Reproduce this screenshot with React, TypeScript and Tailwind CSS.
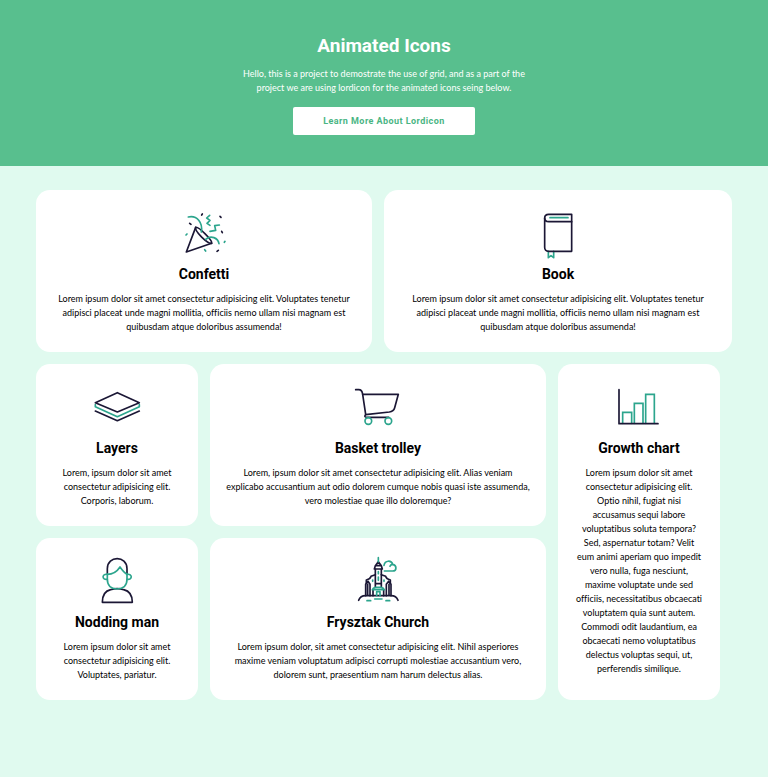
import type { ReactNode } from "react";

const DARK = "#1b1735";
const TEAL = "#2ca58d";

function Icon({ viewBox, children }: { viewBox: string; children: ReactNode }) {
  return (
    <svg
      viewBox={viewBox}
      className="h-[50px] w-[50px] overflow-visible"
      fill="none"
      strokeWidth={5}
      strokeLinecap="round"
      strokeLinejoin="round"
      aria-hidden="true"
    >
      {children}
    </svg>
  );
}

const confetti = (
  <Icon viewBox="26 24 150 150">
    <g stroke={DARK}>
      <path d="M76 82 L48 156 L124 130" />
      <path d="M76 82 C84 78 128 122 124 130 C112 132 72 94 76 82Z" />
      <path d="M94 45 L96 42 M58 70 L62 73 M149 49 L152 52 M154 94 L156 98 M140 154 L144 151" />
    </g>
    <g stroke={TEAL}>
      <path d="M54 51 C80 45 98 68 93 96" />
      <path d="M106 118 C122 104 143 114 146 131" />
      <path d="M118 46 L109 54 L119 61 L110 70 L119 76" />
      <path d="M147 75 L133 77 L136 91 L119 94" />
      <path d="M47 105 L50 102 M103 149 L106 153 M162 127 L164 124" />
    </g>
  </Icon>
);

const book = (
  <Icon viewBox="25 24 150 150">
    <path stroke={TEAL} d="M71 154 V173 L79 167 L87 173 V154" />
    <path stroke={TEAL} d="M76 53 H130" />
    <g stroke={DARK}>
      <path d="M141 43 H72 C56 43 56 65 72 65 H141 Z" />
      <path d="M60 54 V142 C60 150 64 154 72 154 H141 V65" />
    </g>
  </Icon>
);

const layers = (
  <Icon viewBox="37 21 150 150">
    <path stroke={TEAL} d="M47 89 V95 L113 125 L179 95 V89" />
    <g stroke={DARK}>
      <path d="M113 53 L179 83 L113 111 L47 83 Z" />
      <path d="M47 108 L113 137 L179 108" />
    </g>
  </Icon>
);

const cart = (
  <Icon viewBox="39 21 150 150">
    <g stroke={DARK}>
      <path d="M47 44 H56 C64 44 67 50 68 58 L77 118" />
      <path d="M68 58 H175 L164 98 Q161 109 148 111 L77 119 Q70 127 82 127 H146" />
    </g>
    <g stroke={TEAL}>
      <circle cx="85" cy="138" r="10" />
      <circle cx="145" cy="138" r="10" />
    </g>
  </Icon>
);

const chart = (
  <Icon viewBox="42 21 150 150">
    <g stroke={TEAL} strokeLinejoin="miter">
      <path d="M68 145 V112 H95 V145" />
      <path d="M103 145 V85 H129 V145" />
      <path d="M137 145 V58 H163 V145" />
    </g>
    <path stroke={DARK} d="M57 44 V146 H174" />
  </Icon>
);

const man = (
  <Icon viewBox="37 33 150 150">
    <g stroke={DARK}>
      <path d="M83 88 V71 C83 31 142 31 142 71 V88" />
      <path d="M93 134 C75 138 68 150 68 172 H158 C158 150 150 138 132 134 C120 130 105 130 93 134Z" />
    </g>
    <g stroke={TEAL}>
      <path d="M83 88 V103 C83 122 95 132 112 132 C130 132 142 122 142 103 V88" />
      <path d="M83 88 C98 88 112 80 121 66 C128 76 134 84 142 88" />
      <path d="M83 88 C66 85 66 106 83 103 M142 88 C159 85 159 106 142 103" />
    </g>
  </Icon>
);

const church = (
  <Icon viewBox="38 33 150 150">
    <g stroke={DARK}>
      <path d="M55 166 Q60 152 76 152 H152 Q168 152 173 166" />
      <path d="M114 50 L105 62 H123 Z M102 72 H126 M105 62 L102 72 M123 62 L126 72" />
      <path d="M105 73 V126 M123 73 V126" />
      <path d="M105 89 L92 94 Q90 102 78 105 V115 M123 89 L136 94 Q138 102 150 105 V115" />
      <path d="M83 109 L76 118 V152 M83 109 L89 118 V152 M82 118 V150 M145 109 L138 118 V152 M145 109 L152 118 V152 M146 118 V150" />
      <path d="M98 134 V152 M130 134 V152 M107 116 H121" />
    </g>
    <g stroke={TEAL}>
      <path d="M114 38 V50 M114 80 V86 M114 96 V106 M97 105 V109 M131 105 V109" />
      <path d="M96 134 Q98 128 106 127 H122 Q130 128 132 134 Z" />
      <path d="M109 152 V140 H119 V152" />
      <path d="M131 61 C134 45 153 45 157 58 C170 60 170 78 157 78 H132 M149 64 Q151 58 157 59" />
      <path d="M80 167 H91 M103 162 H125 M137 167 H148" />
    </g>
  </Icon>
);

const cards = [
  {
    title: "Confetti",
    icon: confetti,
    span: "col-span-2",
    text: "Lorem ipsum dolor sit amet consectetur adipisicing elit. Voluptates tenetur\nadipisci placeat unde magni mollitia, officiis nemo ullam nisi magnam est\nquibusdam atque doloribus assumenda!",
  },
  {
    title: "Book",
    icon: book,
    span: "col-span-3",
    text: "Lorem ipsum dolor sit amet consectetur adipisicing elit. Voluptates tenetur\nadipisci placeat unde magni mollitia, officiis nemo ullam nisi magnam est\nquibusdam atque doloribus assumenda!",
  },
  {
    title: "Layers",
    icon: layers,
    span: "col-span-1",
    text: "Lorem, ipsum dolor sit amet\nconsectetur adipisicing elit.\nCorporis, laborum.",
  },
  {
    title: "Basket trolley",
    icon: cart,
    span: "col-span-2",
    text: "Lorem, ipsum dolor sit amet consectetur adipisicing elit. Alias veniam\nexplicabo accusantium aut odio dolorem cumque nobis quasi iste assumenda,\nvero molestiae quae illo doloremque?",
  },
  {
    title: "Growth chart",
    icon: chart,
    span: "col-span-1 row-span-2",
    text: "Lorem ipsum dolor sit amet\nconsectetur adipisicing elit.\nOptio nihil, fugiat nisi\naccusamus sequi labore\nvoluptatibus soluta tempora?\nSed, aspernatur totam? Velit\neum animi aperiam quo impedit\nvero nulla, fuga nesciunt,\nmaxime voluptate unde sed\nofficiis, necessitatibus obcaecati\nvoluptatem quia sunt autem.\nCommodi odit laudantium, ea\nobcaecati nemo voluptatibus\ndelectus voluptas sequi, ut,\nperferendis similique.",
  },
  {
    title: "Nodding man",
    icon: man,
    span: "col-start-1",
    text: "Lorem ipsum dolor sit amet\nconsectetur adipisicing elit.\nVoluptates, pariatur.",
  },
  {
    title: "Frysztak Church",
    icon: church,
    span: "col-span-2",
    text: "Lorem ipsum dolor, sit amet consectetur adipisicing elit. Nihil asperiores\nmaxime veniam voluptatum adipisci corrupti molestiae accusantium vero,\ndolorem sunt, praesentium nam harum delectus alias.",
  },
];

export default function App() {
  return (
    <div className="min-h-screen bg-[#e0faef] pb-6 text-center font-['Lato','Liberation_Sans',sans-serif] text-black [font-variant-ligatures:none]">
      <header className="flex flex-col items-center bg-[#58bf8e] px-9 pt-[31px] pb-[31px] text-white">
        <h1 className="font-['Roboto',sans-serif] text-[19px] leading-[30px] font-bold">Animated Icons</h1>
        <p className="mt-1.5 text-[9px] leading-[14px] whitespace-pre-line">
          {"Hello, this is a project to demostrate the use of grid, and as a part of the\nproject we are using lordicon for the animated icons seing below."}
        </p>
        <button
          type="button"
          className="mt-3 rounded-xs bg-white px-[30px] font-['Roboto',sans-serif] text-[9px] leading-[28px] font-bold tracking-wider text-[#49b583]"
        >
          Learn More About Lordicon
        </button>
      </header>
      <main className="grid grid-cols-[repeat(4,minmax(0,1fr))_0px] gap-3 px-9 pt-6">
        {cards.map((card) => (
          <section
            key={card.title}
            className={`flex flex-col items-center rounded-[14px] bg-white py-[18px] ${card.span}`}
          >
            {card.icon}
            <h2 className="mt-1 font-['Roboto',sans-serif] text-sm leading-6 font-bold">{card.title}</h2>
            <p className="mt-1.5 text-[9px] leading-[14px] whitespace-pre-line">{card.text}</p>
          </section>
        ))}
      </main>
    </div>
  );
}
